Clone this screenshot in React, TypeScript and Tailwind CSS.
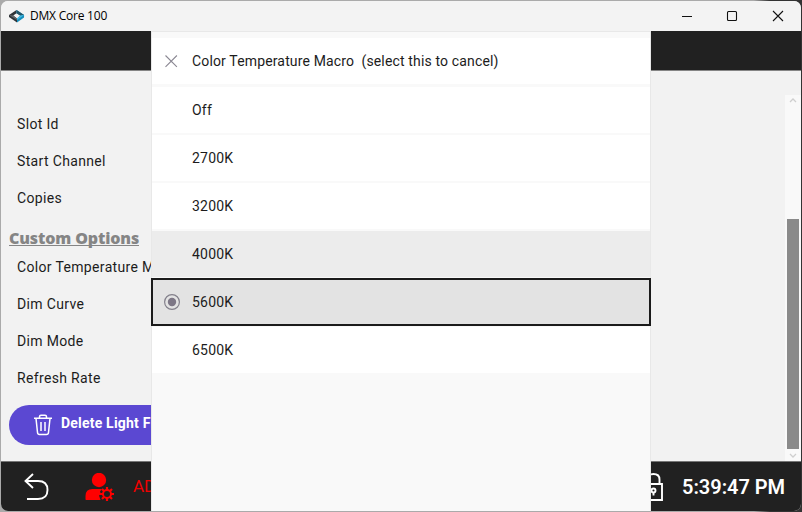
import React from "react";

const fieldLabels = ["Slot Id", "Start Channel", "Copies"];
const customLabels = ["Color Temperature Macro", "Dim Curve", "Dim Mode", "Refresh Rate"];
const choices = ["Off", "2700K", "3200K", "4000K", "5600K", "6500K"];

function Logo() {
  return (
    <svg width="16" height="14" viewBox="0 0 17 14" preserveAspectRatio="none" className="shrink-0">
      <path d="M0 6 8 1v3.2L4.500 6.500 8.500 9.500v4L0 8z" fill="#303438" />
      <path d="M8 1l8 5v2.500L8.500 13.500v-4l3.500-3L8 4.200z" fill="#168fbd" />
      <path d="M8 1l8 5-4 .8-4-2.600z" fill="#235568" />
      <path d="M0 6l4.500.5 4 3v1.500z" fill="#62676b" />
      <path d="M12 6.500 16 6 8.500 11V9.500z" fill="#46bee8" />
    </svg>
  );
}

function TitleBar() {
  return (
    <div className="flex h-[30px] shrink-0 items-center bg-[#f3f3f3] pl-2">
      <Logo />
      <span className="ml-[5px] whitespace-nowrap font-['Open_Sans','Noto_Sans',sans-serif] text-[12px] tracking-[-0.22px] text-black">
        DMX Core 100
      </span>
      <div className="ml-auto flex h-full items-center pr-[17px]">
        <svg width="102" height="12" viewBox="0 0 102 12" fill="none" stroke="#111">
          <path d="M0 6.500h10" />
          <rect x="45.500" y="1.500" width="9" height="9" rx="1" strokeWidth="1.100" />
          <path d="M91 1l10 10M101 1 91 11" strokeWidth="1.100" />
        </svg>
      </div>
    </div>
  );
}

function FieldLabel({ text }: { text: string }) {
  return (
    <div className="flex h-[37px] items-center whitespace-nowrap pl-4 text-[14px] tracking-[0.34px] text-[#1c1c1c]">
      {text}
    </div>
  );
}

function Chevron({ down = false }: { down?: boolean }) {
  return (
    <svg width="8" height="5" viewBox="0 0 8 5" fill="none" stroke="#cfcfcf" strokeWidth="1.300">
      <path d={down ? "M1 1l3 3 3-3" : "M1 4l3-3 3 3"} />
    </svg>
  );
}

function Content() {
  return (
    <div className="flex h-[390px] shrink-0 bg-[#f2f2f2]">
      <div className="flex min-w-0 flex-1 flex-col overflow-hidden pt-[35px]">
        {fieldLabels.map((text) => (
          <FieldLabel key={text} text={text} />
        ))}
        <div className="flex h-8 items-end pb-[3px] pl-2">
          <span className="h-[16px] whitespace-nowrap border-b border-[#858585] font-['Open_Sans','Noto_Sans',sans-serif] text-[16px] font-extrabold leading-[16px] tracking-[-0.13px] text-[#858585]">
            Custom Options
          </span>
        </div>
        {customLabels.map((text) => (
          <FieldLabel key={text} text={text} />
        ))}
        <button className="ml-2 mt-2 flex h-10 w-[214px] shrink-0 items-center rounded-full bg-[#5b48d2] pl-6 text-white">
          <svg width="20" height="22" viewBox="0 0 20 22" fill="none" stroke="white" strokeWidth="1.500" className="shrink-0">
            <path d="M1 4.300h18M6.500 4V2.700Q6.500 1.200 8 1.200h4q1.500 0 1.500 1.500V4M3 4.500l1.500 14Q4.700 20.500 6.500 20.500h7q1.800 0 2-2L17 4.500M8 8v9M12 8v9" />
          </svg>
          <span className="ml-2 whitespace-nowrap pb-1 text-[14px] font-bold tracking-[0.2px]">Delete Light Fixture</span>
        </button>
      </div>
      <div className="mt-6 flex w-4 shrink-0 flex-col items-center bg-[#f9f9f9] pt-[3px]">
        <Chevron />
        <div className="mt-[116px] h-[230px] w-3 bg-[#8a8a8a]" />
        <div className="mt-1 flex">
          <Chevron down />
        </div>
      </div>
    </div>
  );
}

function AdminIcon() {
  return (
    <svg width="30" height="28" viewBox="0 0 30 28" className="ml-9 shrink-0">
      <circle cx="14" cy="7" r="7.200" fill="#f00" />
      <path d="M1 27q-.5 0-.5-1v-3q0-7 7-7H17l-2 2.500 1 2.500-2 1.500 1.500 4.500z" fill="#f00" />
      <g stroke="#f00" fill="none">
        <circle cx="22" cy="21" r="4" strokeWidth="2" />
        <path d="M22 14v3M22 25v3M15 21h3M26 21h3M17 16l2.200 2.200M24.800 23.800 27 26M27 16l-2.200 2.200M19.200 23.800 17 26" strokeWidth="2.200" />
      </g>
    </svg>
  );
}

function Footer() {
  return (
    <div className="flex min-h-0 flex-1 items-center border-t border-[#767676] bg-[#212121] pl-[23px] pr-4">
      <svg width="25" height="27" viewBox="0 0 25 27" fill="none" stroke="white" strokeWidth="1.900" className="shrink-0">
        <path d="M9 1 1.500 8 9 15M1.500 8H14q9.500 0 9.500 9t-9.500 9H3" />
      </svg>
      <AdminIcon />
      <span className="ml-[18px] text-[17px] text-[#f00000]">ADMIN</span>
      <svg width="19" height="28" viewBox="0 0 19 28" fill="none" stroke="white" strokeWidth="1.900" className="ml-auto shrink-0">
        <path d="M1 11h17v16H1zM3.500 11V6.500q0-5.500 6-5.500t6 5.500V11" />
        <circle cx="9.500" cy="17.500" r="2" />
        <path d="M9.500 19.500v3" />
      </svg>
      <span className="ml-[19px] text-[20px] font-semibold tracking-[-0.04px] text-white">5:39:47 PM</span>
    </div>
  );
}

function Choice({ text }: { text: string }) {
  const selected = text === "5600K";
  const hovered = text === "4000K";
  return (
    <div
      className={
        selected
          ? "-mx-px -mb-px -mt-px flex h-12 items-center border-2 border-[#1b1b1b] bg-[#e3e3e3] pl-[11px]"
          : hovered
            ? "flex h-[46px] items-center bg-[#ececec] pl-3"
            : "flex h-[46px] items-center bg-white pl-3"
      }
    >
      <div className="w-7 shrink-0">
        {selected && (
          <svg width="16" height="16" viewBox="0 0 16 16">
            <circle cx="8" cy="8" r="7.400" fill="none" stroke="#83808b" strokeWidth="1.200" />
            <circle cx="8" cy="8" r="4.200" fill="#7d7786" />
          </svg>
        )}
      </div>
      <span className="whitespace-nowrap text-[14px] tracking-[0.2px] text-[#1c1c1c]">{text}</span>
    </div>
  );
}

function MacroMenu() {
  return (
    <div className="absolute left-[150px] top-[30px] h-[480px] w-[500px] border-x border-t border-[#e8e8e8] bg-[#f9f9f9] pt-[6px]">
      <div className="flex h-[46px] items-center bg-white pl-[13px]">
        <svg width="13" height="13" viewBox="0 0 13 13" stroke="#8b8893" strokeWidth="1.100" className="shrink-0">
          <path d="M.5.5l11.400 11.400M11.900.5.5 11.900" />
        </svg>
        <span className="ml-[14px] whitespace-pre text-[14px] tracking-[0.15px] text-[#1c1c1c]">
          {"Color Temperature Macro  (select this to cancel)"}
        </span>
      </div>
      <div className="flex flex-col gap-[2px] pt-[3px]">
        {choices.map((text) => (
          <Choice key={text} text={text} />
        ))}
      </div>
    </div>
  );
}

export default function App() {
  return (
    <div className="h-[512px] w-[802px] overflow-hidden bg-[linear-gradient(to_right,#aaaaaa_94%,#333333_96%)] p-px font-[Roboto,sans-serif]">
      <div className="relative flex h-[510px] w-[800px] flex-col overflow-hidden rounded-[7px] bg-[#f2f2f2]">
        <TitleBar />
        <div className="h-10 shrink-0 border-b border-[#858585] bg-[#212121]" />
        <Content />
        <Footer />
        <MacroMenu />
      </div>
    </div>
  );
}
